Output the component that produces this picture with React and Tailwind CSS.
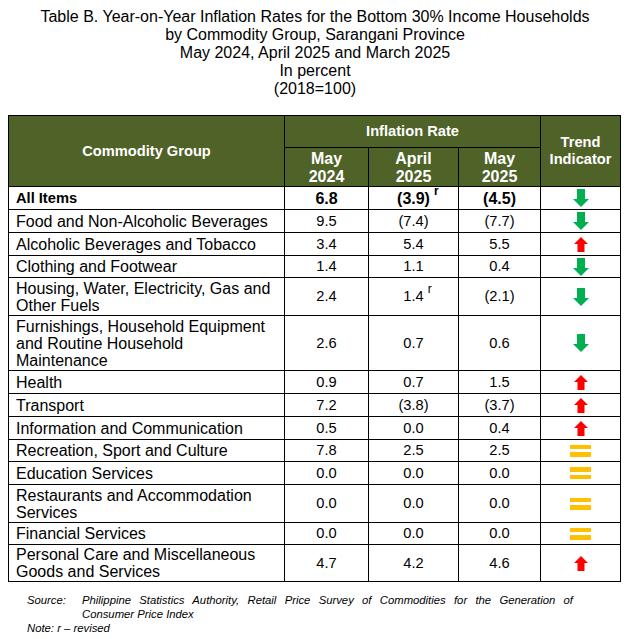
import React from 'react';

const rows = [
  { name: ['All Items'], bold: true, v: ['6.8', '(3.9)', '(4.5)'], rev: 1, t: 'down', h: 'h-[23px]' },
  { name: ['Food and Non-Alcoholic Beverages'], v: ['9.5', '(7.4)', '(7.7)'], t: 'down', h: 'h-[23px]' },
  { name: ['Alcoholic Beverages and Tobacco'], v: ['3.4', '5.4', '5.5'], t: 'up', h: 'h-[23px]' },
  { name: ['Clothing and Footwear'], v: ['1.4', '1.1', '0.4'], t: 'down', h: 'h-[22px]' },
  { name: ['Housing, Water, Electricity, Gas and', 'Other Fuels'], v: ['2.4', '1.4', '(2.1)'], rev: 1, t: 'down', h: 'h-[38px]' },
  { name: ['Furnishings, Household Equipment', 'and Routine Household', 'Maintenance'], v: ['2.6', '0.7', '0.6'], t: 'down', h: 'h-[55px]' },
  { name: ['Health'], v: ['0.9', '0.7', '1.5'], t: 'up', h: 'h-[23px]' },
  { name: ['Transport'], v: ['7.2', '(3.8)', '(3.7)'], t: 'up', h: 'h-[23px]' },
  { name: ['Information and Communication'], v: ['0.5', '0.0', '0.4'], t: 'up', h: 'h-[23px]' },
  { name: ['Recreation, Sport and Culture'], v: ['7.8', '2.5', '2.5'], t: 'eq', h: 'h-[22px]' },
  { name: ['Education Services'], v: ['0.0', '0.0', '0.0'], t: 'eq', h: 'h-[23px]' },
  { name: ['Restaurants and Accommodation', 'Services'], v: ['0.0', '0.0', '0.0'], t: 'eq', h: 'h-[38px]' },
  { name: ['Financial Services'], v: ['0.0', '0.0', '0.0'], t: 'eq', h: 'h-[22px]' },
  { name: ['Personal Care and Miscellaneous', 'Goods and Services'], v: ['4.7', '4.2', '4.6'], t: 'up', h: 'h-[37px]' },
];

function Trend({ type }) {
  if (type === 'down') {
    return (
      <svg width="16" height="18" viewBox="0 0 16 18" className="mx-auto block">
        <polygon points="4,0 12,0 12,10 16,10 8,18 0,10 4,10" fill="#00B050" />
      </svg>
    );
  }
  if (type === 'up') {
    return (
      <svg width="14" height="15" viewBox="0 0 14 15" className="mx-auto block">
        <polygon points="7,0 14,7 10.5,7 10.5,15 3.5,15 3.5,7 0,7" fill="#FF0000" />
      </svg>
    );
  }
  return (
    <div className="mx-auto flex w-[21px] flex-col gap-[3px]">
      <div className="h-[4.5px] bg-[#FFC000]" />
      <div className="h-[4.5px] bg-[#FFC000]" />
    </div>
  );
}

export default function App() {
  return (
    <div className="w-[630px] h-[639px] bg-white text-black font-['Liberation_Sans',Arial,sans-serif]">
      {/* Title */}
      <div className="pt-[8px] text-center text-[16px] leading-[18px]">
        <p>Table B. Year-on-Year Inflation Rates for the Bottom 30% Income Households</p>
        <p>by Commodity Group, Sarangani Province</p>
        <p>May 2024, April 2025 and March 2025</p>
        <p>In percent</p>
        <p>(2018=100)</p>
      </div>

      {/* Table */}
      <table className="mt-[17px] ml-[8px] w-[612px] table-fixed border-collapse">
        <colgroup>
          <col className="w-[276px]" />
          <col className="w-[84px]" />
          <col className="w-[90px]" />
          <col className="w-[82px]" />
          <col className="w-[80px]" />
        </colgroup>
        <thead>
          <tr className="h-[32px] bg-[#4F6228] text-white font-bold">
            <th rowSpan={2} className="border border-black text-[14.67px] leading-[17px]">Commodity Group</th>
            <th colSpan={3} className="border border-black text-[14.67px] leading-[17px]">Inflation Rate</th>
            <th rowSpan={2} className="border border-black text-[14.67px] leading-[17px]">
              Trend
              <br />
              Indicator
            </th>
          </tr>
          <tr className="h-[37px] bg-[#4F6228] text-white font-bold text-[16px] leading-[18px]">
            <th className="border border-black pt-[2px]">May<br />2024</th>
            <th className="border border-black pt-[2px]">April<br />2025</th>
            <th className="border border-black pt-[2px]">May<br />2025</th>
          </tr>
        </thead>
        <tbody>
          {rows.map((row) => (
            <tr key={row.name.join(' ')} className={row.h}>
              <td
                className={`border border-black pl-[7px] pr-1 py-0 leading-[17px] ${
                  row.bold ? 'font-bold text-[14.67px]' : 'text-[16px]'
                }`}
              >
                {row.name.map((line, i) => (
                  <div key={i}>{line}</div>
                ))}
              </td>
              {row.v.map((val, i) => (
                <td
                  key={i}
                  className={`border border-black p-0 text-center leading-[17px] ${
                    row.bold ? 'font-bold text-[16px]' : 'text-[14.67px]'
                  }`}
                >
                  <span className="relative">
                    {val}
                    {row.rev && i === 1 ? (
                      <span className="absolute left-full top-[-5px] ml-[4px] text-[12px] leading-none">r</span>
                    ) : null}
                  </span>
                </td>
              ))}
              <td className="border border-black p-0">
                <Trend type={row.t} />
              </td>
            </tr>
          ))}
        </tbody>
      </table>

      {/* Footer */}
      <div className="mt-[11px] pl-[27px] text-[11.3px] italic leading-[14px]">
        <div className="flex">
          <span className="w-[55px] shrink-0">Source:</span>
          <div className="w-[491px]">
            <div className="text-justify [text-align-last:justify]">
              Philippine Statistics Authority, Retail Price Survey of Commodities for the Generation of
            </div>
            <div>Consumer Price Index</div>
          </div>
        </div>
        <div>Note: r – revised</div>
      </div>
    </div>
  );
}
